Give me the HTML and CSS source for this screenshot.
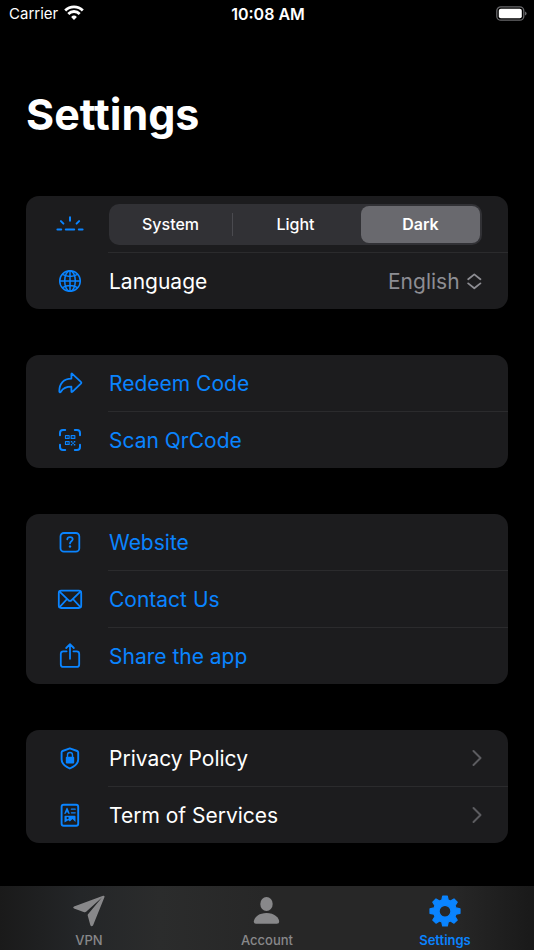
FILE: index.html
```html
<!doctype html>
<html lang="en">
<head>
	<meta charset="utf-8">
	<meta name="viewport" content="width=device-width, initial-scale=1.0">
	<title>Settings</title>
	<link rel="stylesheet" href="styles.css">
</head>
<body>
	<header class="status">
		<span class="status-carrier">Carrier
			<svg class="status-wifi" viewBox="0 0 20 15" width="20" height="15" fill="none" stroke="currentColor" stroke-width="2.8">
				<path d="M1.2 5.4a12.6 12.6 0 0 1 17.6 0"/>
				<path d="M4.3 8.9a8 8 0 0 1 11.4 0"/>
				<path d="M10 15l-2.9-3a4.1 4.1 0 0 1 5.8 0z" fill="currentColor" stroke="none"/>
			</svg>
		</span>
		<span class="status-time">10:08 AM</span>
		<svg class="status-battery" viewBox="0 0 32 15" width="32" height="15">
			<rect x="1.8" y=".8" width="27" height="13.4" rx="4" fill="none" stroke="#68686b" stroke-width="1.3"/>
			<rect x="3.8" y="2.8" width="23" height="9.4" rx="2" fill="#fff"/>
			<path d="M30 5.4q1.6.6 1.6 2.1T30 9.600z" fill="#68686b"/>
		</svg>
	</header>

	<main class="page">
		<h1 class="title">Settings</h1>

		<section class="group">
			<div class="row">
				<svg class="icon" viewBox="0 0 36 28" stroke-width="2">
					<path d="M5.4 19.6h3.8M13.8 19.6h8.4M26.8 19.6h3.8M18 7.3v3.4M8.9 11.1l2.5 2.5M27.1 11.1l-2.5 2.5"/>
				</svg>
				<fieldset class="segments">
					<legend class="hidden">Appearance</legend>
					<input type="radio" name="theme" id="theme-system" class="hidden">
					<label class="segment" for="theme-system">System</label>
					<input type="radio" name="theme" id="theme-light" class="hidden">
					<label class="segment segment-divided" for="theme-light">Light</label>
					<input type="radio" name="theme" id="theme-dark" class="hidden" checked>
					<label class="segment" for="theme-dark">Dark</label>
				</fieldset>
			</div>
			<div class="row">
				<svg class="icon" viewBox="0 0 36 28" stroke-width="1.5">
					<circle cx="18" cy="14" r="10.3"/>
					<ellipse cx="18" cy="14" rx="5.3" ry="10.3"/>
					<path d="M18 3.7v20.6M7.7 14h20.6M10.4 7.4q7.6 4 15.2 0M10.4 20.6q7.6-4 15.2 0"/>
				</svg>
				<label class="row-label" for="language">Language</label>
				<span class="picker">
					<select class="picker-select" id="language">
						<option>English</option>
					</select>
					<svg viewBox="0 0 15 17" width="15" height="17" fill="none" stroke="currentColor" stroke-width="1.8" stroke-linecap="round" stroke-linejoin="round">
						<path d="M1.2 6.2l6.1-4.8 6.1 4.8M1.2 10.4l6.1 4.8 6.1-4.8"/>
					</svg>
				</span>
			</div>
		</section>

		<section class="group">
			<a class="row row-link" href="#redeem">
				<svg class="icon" viewBox="0 0 36 28" stroke-width="1.8">
					<path d="M19.4 9.6V5.1q0-1 .9-.3l8.6 8.1q.9.8 0 1.7l-8.6 8.2q-.9.7-.9-.4v-4.7c-5.1 0-8.3 1.4-10.5 5-.6.9-1.600.8-1.600-.5C7.3 14.7 11.6 9.6 19.4 9.6z"/>
				</svg>
				<span class="row-label">Redeem Code</span>
			</a>
			<a class="row row-link" href="#scan">
				<svg class="icon" viewBox="0 0 36 28" stroke-width="2">
					<path d="M13.2 4H11Q8 4 8 7v2.2M22.8 4H25q3 0 3 3v2.2M13.2 24H11q-3 0-3-3v-2.2M22.8 24H25q3 0 3-3v-2.2"/>
					<g stroke-width="1.2">
						<path d="M13.5 9.5h3.6v3h-3.6zM19.2 9.5h3.6v3h-3.6zM13.5 15.5h3.6v3h-3.6z"/>
						<path class="solid" d="M14.8 10.5h1v1h-1zM20.5 10.5h1v1h-1zM14.8 16.5h1v1h-1zM18.8 15h1.5v1.5h-1.5zM21.8 15h1.5v1.5h-1.5zM20.3 16.5h1.5V18h-1.5zM18.8 18h1.5v1.5h-1.5zM21.8 18h1.5v1.5h-1.5z"/>
					</g>
				</svg>
				<span class="row-label">Scan QrCode</span>
			</a>
		</section>

		<section class="group">
			<a class="row row-link" href="#website">
				<svg class="icon" viewBox="0 0 36 28" stroke-width="1.8">
					<rect x="8.5" y="5" width="18.8" height="18.6" rx="3.4"/>
					<path d="M15.3 11.3c.1-1.4 1.2-2.2 2.7-2.2 1.6 0 2.7.9 2.7 2.2 0 1.9-2.7 2-2.7 4.1"/>
					<circle class="solid" cx="18" cy="18.5" r="1.2"/>
				</svg>
				<span class="row-label">Website</span>
			</a>
			<a class="row row-link" href="#contact">
				<svg class="icon" viewBox="0 0 36 28" stroke-width="1.8">
					<rect x="6.8" y="5.6" width="22.4" height="17.4" rx="2.4"/>
					<path d="M7.6 6.7l8.8 8.5q1.6 1.4 3.2 0l8.8-8.5M7.6 22.1l7-7.6M28.4 22.1l-7-7.6"/>
				</svg>
				<span class="row-label">Contact Us</span>
			</a>
			<a class="row row-link" href="#share">
				<svg class="icon" viewBox="0 0 36 28" stroke-width="1.8">
					<path d="M14.6 9.3h-3.3q-2.5 0-2.5 2.5v10.6q0 2.5 2.5 2.5h13.4q2.5 0 2.5-2.5V11.8q0-2.5-2.5-2.5h-3.3M18 16.8V2.6M14.2 6L18 2.2 21.8 6"/>
				</svg>
				<span class="row-label">Share the app</span>
			</a>
		</section>

		<section class="group">
			<a class="row" href="#privacy">
				<svg class="icon" viewBox="0 0 36 28" stroke-width="1.9">
					<path d="M17.8 4.4l7.4 2.6q1 .4 1 1.4v7.2c0 4.4-3.7 6.8-8.4 8.9-4.5-2.1-8.2-4.5-8.2-8.9V8.4q0-1 1-1.4z"/>
					<rect class="solid" x="13.8" y="12.8" width="8.4" height="6.8" rx="1"/>
					<path d="M15.5 13v-2a2.5 2.5 0 0 1 5 0v2" stroke-width="1.4"/>
				</svg>
				<span class="row-label">Privacy Policy</span>
				<svg class="chevron" viewBox="0 0 10 18" width="10" height="18"><path d="M1.5 2l7 7-7 7"/></svg>
			</a>
			<a class="row" href="#terms">
				<svg class="icon" viewBox="0 0 36 28" stroke-width="1.9">
					<rect x="9.6" y="3.7" width="16.6" height="21" rx="2"/>
					<path d="M13 12.4l2-5 2 5M13.8 10.8h2.5M19.4 8.2h3.8M19.4 11.8h3.8" stroke-width="1.3"/>
					<path class="solid" fill-rule="evenodd" d="M13.2 14.8h9.6q.7 0 .7.7v5.4l-3-2.9-2.6 2.5-1.6-1.3-3.8 2.3v-6q0-.7.7-.7zM15.6 16a1.1 1.1 0 1 0 0 2.2 1.1 1.1 0 0 0 0-2.2z"/>
				</svg>
				<span class="row-label">Term of Services</span>
				<svg class="chevron" viewBox="0 0 10 18" width="10" height="18"><path d="M1.5 2l7 7-7 7"/></svg>
			</a>
		</section>
	</main>

	<nav class="tabs">
		<a class="tab" href="#vpn">
			<svg class="tab-icon" viewBox="0 0 34 34">
				<path d="M31.1 1.8L2 12.6q-1.8 1 0 2l10.3 3.6q1 .3 1.8-.4L30 3.5 16.200 19.900q-.7.7-.5 1.700L18.300 31q1 2.200 2.700.4L32.500 3q.3-1.500-1.400-1.200z"/>
			</svg>
			VPN
		</a>
		<a class="tab" href="#account">
			<svg class="tab-icon" viewBox="0 0 34 34">
				<ellipse cx="16.5" cy="10" rx="6.2" ry="6.9"/>
				<path d="M6.2 29.8q-2.4 0-2.4-2C3.8 23.8 8.5 19 16.5 19s12.7 4.8 12.7 8.800q0 2-2.400 2z"/>
			</svg>
			Account
		</a>
		<a class="tab tab-active" href="#settings" aria-current="page">
			<svg class="tab-icon" viewBox="0 0 34 34">
				<path fill-rule="evenodd" stroke="currentColor" stroke-width="1.2" stroke-linejoin="round" d="M14.7 2.1h4.6l.9 4 2.3 1 3.5-2.2 3.2 3.2-2.2 3.5 1 2.3 4 .9v4.5l-4 .9-1 2.3 2.2 3.5-3.2 3.2-3.5-2.2-2.3 1-.9 4h-4.6l-.9-4-2.3-1L8 29.2 4.8 26 7 22.5l-1-2.3-4-.9v-4.5l4-.9 1-2.3-2.2-3.5L8 4.9l3.5 2.2 2.3-1zM17 11.3a5.900 5.900 0 1 0 0 11.800 5.900 5.900 0 0 0 0-11.800z"/>
			</svg>
			Settings
		</a>
	</nav>
</body>
</html>
```

FILE: styles.css
```css
* {
	box-sizing: border-box;
}
body {
	display: flex;
	flex-direction: column;
	min-height: 100vh;
	margin: 0;
	background-color: #000;
	color: #fff;
	font-family: Inter, "Liberation Sans", sans-serif;
}
a {
	color: inherit;
	text-decoration: none;
}
.hidden {
	position: absolute;
	width: 1px;
	height: 1px;
	margin: 0;
	opacity: 0;
	overflow: hidden;
}

/* status bar */
.status {
	display: grid;
	grid-template-columns: 1fr auto 1fr;
	align-items: center;
	height: 27px;
	padding: 0 7px 0 9px;
	font-size: 15px;
}
.status-carrier {
	display: flex;
	align-items: center;
	gap: 6px;
}
.status-wifi {
	margin-bottom: 2px;
}
.status-time {
	font-size: 16px;
	font-weight: 600;
}
.status-battery {
	justify-self: end;
}

.page {
	flex: 1;
	padding: 0 26px 43px;
}
.title {
	margin: 60px 0 55px;
	font-size: 43px;
	line-height: 54px;
	font-weight: 700;
}

/* grouped lists */
.group {
	margin-bottom: 46px;
	border-radius: 13px;
	background-color: #1c1c1e;
}
.group:last-child {
	margin-bottom: 0;
}
.row {
	position: relative;
	display: flex;
	align-items: center;
	height: 56px;
	padding: 0 26px;
}
.row + .row {
	height: 57px;
	padding-top: 1px;
}
.row + .row::before {
	content: "";
	position: absolute;
	top: 0;
	left: 82px;
	right: 0;
	height: 1px;
	background-color: #2b2b2d;
}
.row-link {
	color: #0a84ff;
}
.row-label {
	flex: 1;
	padding-top: 2px;
	font-size: 21px;
	line-height: 28px;
}
.icon {
	flex: none;
	width: 36px;
	height: 28px;
	margin-right: 21px;
	fill: none;
	stroke: #0a84ff;
	stroke-linecap: round;
	stroke-linejoin: round;
}
.icon .solid {
	fill: #0a84ff;
	stroke: none;
}
.chevron {
	fill: none;
	stroke: #5c5c60;
	stroke-width: 2;
	stroke-linecap: round;
	stroke-linejoin: round;
}

.segments {
	flex: 1;
	display: grid;
	grid-template-columns: repeat(3, 1fr);
	gap: 6px;
	min-width: 0;
	height: 41px;
	margin: 0;
	padding: 2px;
	border: 0;
	border-radius: 10px;
	background-color: #313135;
}
.segment {
	position: relative;
	border-radius: 8px;
	font-size: 16px;
	line-height: 37px;
	font-weight: 500;
	text-align: center;
}
.segment-divided::before {
	content: "";
	position: absolute;
	top: 7px;
	left: -4px;
	width: 1px;
	height: 23px;
	background-color: #4a4a4f;
}
:checked + .segment {
	background-color: #69696e;
	font-weight: 600;
}

.picker {
	display: flex;
	align-items: center;
	gap: 7px;
	color: #8d8d93;
}
.picker-select {
	appearance: none;
	padding: 2px 0 0;
	border: 0;
	background: none;
	color: inherit;
	font: inherit;
	font-size: 21px;
	line-height: 28px;
}

/* bottom tabs */
.tabs {
	display: grid;
	grid-template-columns: repeat(3, 1fr);
	height: 64px;
	background: linear-gradient(to right, #1a1a1a, #242628 15%, #2b2c2c 30%, #272727 50%, #272727 85%, #191919);
}
.tab {
	display: flex;
	flex-direction: column;
	align-items: center;
	gap: 4px;
	padding-top: 8px;
	color: #88888a;
	font-size: 13px;
	line-height: 16px;
	font-weight: 500;
}
.tab-active {
	color: #0a84ff;
	font-weight: 600;
}
.tab-icon {
	width: 34px;
	height: 34px;
	fill: currentColor;
}
```
